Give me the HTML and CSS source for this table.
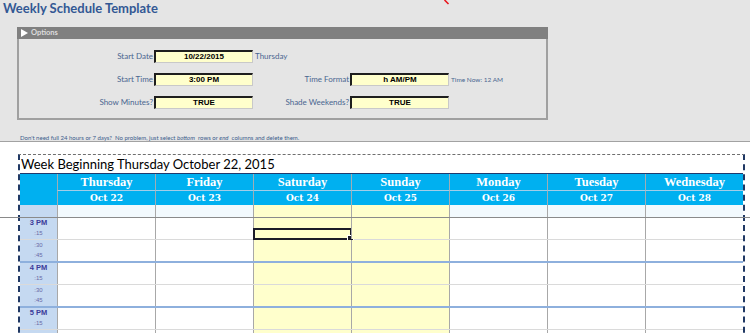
FILE: index.html
```html
<!DOCTYPE html>
<html lang="en">
<head>
<meta charset="utf-8">
<title>Weekly Schedule Template</title>
<link rel="stylesheet" href="styles.css">
</head>
<body>
<div class="sheet-top">
  <h1 class="title">Weekly Schedule Template</h1>
  <section class="options">
    <div class="options-head">
      <svg class="tri" width="7" height="8" viewBox="0 0 7 8"><polygon points="0,0 7,4 0,8" fill="#fff"/></svg>
      <span>Options</span>
    </div>
    <div class="options-body">
      <span class="lbl">Start Date</span><span class="val">10/22/2015</span><span class="aside">Thursday</span><span></span><span></span>
      <span class="lbl">Start Time</span><span class="val">3:00 PM</span><span class="lbl">Time Format</span><span class="val">h AM/PM</span><span class="aside small">Time Now: 12 AM</span>
      <span class="lbl">Show Minutes?</span><span class="val">TRUE</span><span class="lbl">Shade Weekends?</span><span class="val">TRUE</span><span></span>
    </div>
  </section>
  <p class="note">Don't need full 24 hours or 7 days?&nbsp; No problem, just select <i>bottom</i>&nbsp; rows or <i>end</i>&nbsp; columns and delete them.</p>
</div>

<svg class="red-mark" width="8" height="6" viewBox="0 0 8 6"><path d="M1.5 0 L5.5 4" stroke="#e8141c" stroke-width="1.6" fill="none"/></svg>
<div class="freeze"></div>

<div class="schedule">
  <div class="week">Week Beginning Thursday October 22, 2015</div>

  <div class="cols head days">
    <span></span><span>Thursday</span><span>Friday</span><span>Saturday</span><span>Sunday</span><span>Monday</span><span>Tuesday</span><span>Wednesday</span>
  </div>
  <div class="cols head dates">
    <span></span><span>Oct 22</span><span>Oct 23</span><span>Oct 24</span><span>Oct 25</span><span>Oct 26</span><span>Oct 27</span><span>Oct 28</span>
  </div>

  <div class="cols row blank">
    <span class="time"></span><span class="c"></span><span class="c"></span><span class="c we"></span><span class="c we"></span><span class="c"></span><span class="c"></span><span class="c"></span>
  </div>

  <!-- 3 PM -->
  <div class="cols row half-a">
    <span class="time"><b class="hr">3 PM</b><b class="mn">:15</b></span>
    <span class="c"></span><span class="c"></span><span class="c we"><i class="sel"></i></span><span class="c we"></span><span class="c"></span><span class="c"></span><span class="c"></span>
  </div>
  <div class="cols row half-b">
    <span class="time"><b class="mn">:30</b><b class="mn">:45</b></span>
    <span class="c"></span><span class="c"></span><span class="c we"></span><span class="c we"></span><span class="c"></span><span class="c"></span><span class="c"></span>
  </div>

  <!-- 4 PM -->
  <div class="cols row half-a">
    <span class="time"><b class="hr">4 PM</b><b class="mn">:15</b></span>
    <span class="c"></span><span class="c"></span><span class="c we"></span><span class="c we"></span><span class="c"></span><span class="c"></span><span class="c"></span>
  </div>
  <div class="cols row half-b">
    <span class="time"><b class="mn">:30</b><b class="mn">:45</b></span>
    <span class="c"></span><span class="c"></span><span class="c we"></span><span class="c we"></span><span class="c"></span><span class="c"></span><span class="c"></span>
  </div>

  <!-- 5 PM -->
  <div class="cols row half-a">
    <span class="time"><b class="hr">5 PM</b><b class="mn">:15</b></span>
    <span class="c"></span><span class="c"></span><span class="c we"></span><span class="c we"></span><span class="c"></span><span class="c"></span><span class="c"></span>
  </div>
  <div class="cols row half-b">
    <span class="time"><b class="mn">:30</b><b class="mn">:45</b></span>
    <span class="c"></span><span class="c"></span><span class="c we"></span><span class="c we"></span><span class="c"></span><span class="c"></span><span class="c"></span>
  </div>
</div>
</body>
</html>
```

FILE: styles.css
```css
* {
  box-sizing: border-box;
  margin: 0;
  padding: 0;
}

html,
body {
  overflow: hidden;
}

body {
  position: relative;
  width: 750px;
  height: 333px;
  background: #fff;
  font-family: Lato, "Liberation Sans", sans-serif;
}

/* ---------- grey sheet header ---------- */
.sheet-top {
  height: 142px;
  background: #e5e5e5;
  border-bottom: 1px solid #a2a2a2;
}

.title {
  margin-left: 3px;
  font: bold 13px/16px Lato, "Liberation Sans", sans-serif;
  color: #335894;
}

.options {
  width: 531px;
  margin: 11px 0 0 17px;
}

.options-head {
  display: flex;
  align-items: center;
  gap: 3px;
  height: 12px;
  padding-left: 4px;
  background: #808080;
  color: #dcdcdc;
  font: bold 7.5px/12px Lato, sans-serif;
}

.options-body {
  display: grid;
  grid-template-columns: 135px 99px 97px 99px 1fr;
  grid-auto-rows: 13px;
  row-gap: 10px;
  padding: 11px 0 9px;
  border: 2px solid #a0a0a0;
  border-top: 0;
}

.lbl {
  padding-right: 1px;
  text-align: right;
  white-space: nowrap;
  font: 8px/13px Lato, sans-serif;
  color: #4a6590;
}

.val {
  background: #ffffcc;
  border-top: 2px solid #1e1e1e;
  border-left: 2px solid #1e1e1e;
  border-right: 1px solid #c9c9c9;
  border-bottom: 1px solid #c9c9c9;
  text-align: center;
  font: bold 8px/10px "Liberation Sans", Arial, sans-serif;
  color: #000;
}

.aside {
  padding-left: 2px;
  white-space: nowrap;
  font: 8px/13px Lato, sans-serif;
  color: #4a6590;
}

.aside.small {
  font-size: 6.5px;
}

.note {
  margin: 14px 0 0 20px;
  white-space: nowrap;
  font: 6px/8px Lato, sans-serif;
  color: #3b5c8c;
}

/* ---------- window decorations ---------- */
.red-mark {
  position: absolute;
  left: 443px;
  top: 0;
}

.freeze {
  position: absolute;
  left: 0;
  top: 217px;
  width: 750px;
  height: 1px;
  background: #8a8a8a;
}

/* ---------- schedule grid ---------- */
.schedule {
  width: 727px;
  margin: 12px 0 0 18px;
  border-top: 1px dashed #6f6f6f;
  border-left: 2px dashed #203864;
  border-right: 2px dashed #203864;
}

.week {
  height: 19px;
  padding-left: 1px;
  border-bottom: 1px solid #1f3a6e;
  font: 13px/18px Lato, sans-serif;
  color: #000;
}

.cols {
  display: grid;
  grid-template-columns: 37px repeat(7, 98px);
}

.head {
  background: #00b0f0;
  color: #fff;
}

.head span {
  text-align: center;
  white-space: nowrap;
}

.head span + span {
  border-left: 1px solid #9fadb5;
}

.days span {
  height: 16px;
  font: bold 12.5px/16px "Liberation Serif", serif;
}

.dates span {
  height: 15px;
  font: bold 9px/14px "DejaVu Serif", serif;
}

.dates span + span {
  border-top: 1px solid #a3cde8;
}

.row .time {
  display: flex;
  flex-direction: column;
  background: #c5d9f1;
}

.row .c {
  position: relative;
  border-left: 1px solid #a8a8a8;
  background: #fff;
}

.row .c.we {
  background: #ffffcc;
}

.blank {
  height: 13px;
  border-bottom: 1px solid #8a8a8a;
}

.blank .c {
  background: #f2f9fd;
}

.half-a {
  height: 22px;
  border-bottom: 1px solid #dadada;
}

.half-b {
  height: 23px;
  border-bottom: 2px solid #8eb0dd;
}

.time b {
  display: block;
  height: 10px;
  line-height: 10px;
  text-align: center;
  font-family: "Liberation Sans", Arial, sans-serif;
}

.time .hr {
  font-size: 7.5px;
  font-weight: bold;
  color: #3c3c9a;
}

.time .mn {
  font-size: 6px;
  font-weight: normal;
  color: #6a6aa6;
}

/* active cell outline with fill handle */
.sel {
  position: absolute;
  left: -1px;
  top: 10px;
  width: 99px;
  height: 12px;
  border: 2px solid #1c1c28;
}

.sel::after {
  content: "";
  position: absolute;
  right: -4px;
  bottom: -4px;
  width: 5px;
  height: 5px;
  background: #1c1c28;
  border: 1px solid #fff;
}
```
